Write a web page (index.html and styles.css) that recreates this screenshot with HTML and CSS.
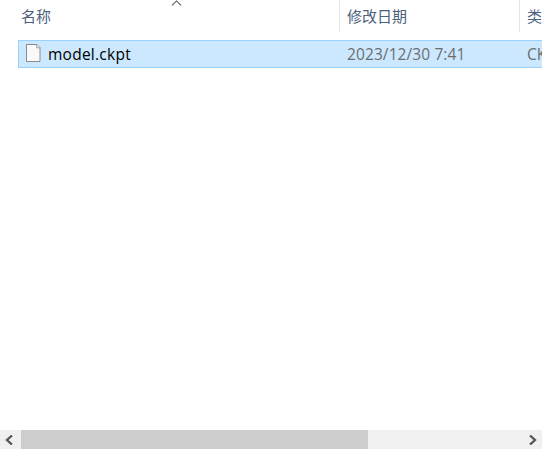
FILE: index.html
```html
<!DOCTYPE html>
<html lang="zh-CN">
<head>
<meta charset="utf-8">
<title>model.ckpt</title>
<link rel="stylesheet" href="styles.css">
</head>
<body>
<main class="explorer">
  <header class="columns">
    <div class="column column-name">名称
      <svg class="sort" width="11" height="6" viewBox="0 0 11 6"><path d="M1 5.3 5.5 .9 10 5.3" fill="none" stroke="#5c5c5c" stroke-width="1.1"/></svg>
    </div>
    <div class="column column-date">修改日期</div>
    <div class="column column-type">类</div>
  </header>
  <section class="files">
    <div class="file">
      <div class="file-name">
        <svg class="file-icon" width="15" height="18" viewBox="0 0 15 18"><path d="M.5.5H11L14 3.5V17.5H.5Z" fill="#f9f9f9" stroke="#8b8b8b"/><path d="M10.7.8V3.8H13.7" fill="#fff" stroke="#999"/></svg>
        <span>model.ckpt</span>
      </div>
      <div class="file-date">2023/12/30 7:41</div>
      <div class="file-type">CK</div>
    </div>
  </section>
  <footer class="scrollbar">
    <div class="arrow arrow-left"><svg width="8" height="10" viewBox="0 0 8 10"><path d="M7 .5 2 5 7 9.5" fill="none" stroke="#565656" stroke-width="2.3"/></svg></div>
    <div class="track"><div class="thumb"></div></div>
    <div class="arrow arrow-right"><svg width="8" height="10" viewBox="0 0 8 10"><path d="M1 .5 6 5 1 9.5" fill="none" stroke="#565656" stroke-width="2.3"/></svg></div>
  </footer>
</main>
</body>
</html>
```
FILE: styles.css
```css
* { box-sizing: border-box; }
body {
  margin: 0;
  background: #fff;
  font-family: "Open Sans", "Noto Sans CJK SC", sans-serif;
}
.explorer {
  display: flex;
  flex-direction: column;
  width: 542px;
  height: 449px;
  overflow: hidden;
}
.columns {
  display: grid;
  grid-template-columns: 322px 180px 180px;
  height: 32px;
  margin-left: 18px;
  color: #4c607a;
  font: 15px/32px "Noto Sans CJK SC", sans-serif;
}
.column {
  position: relative;
  padding-left: 7px;
  border-right: 1px solid #e5e5e5;
  white-space: nowrap;
}
.column-name { padding-left: 3px; }
.sort {
  position: absolute;
  top: 0;
  left: 153px;
}
.files {
  flex: 1;
  padding: 8px 0 0 18px;
}
.file {
  display: grid;
  grid-template-columns: 321px 180px 180px;
  width: 681px;
  height: 28px;
  border: 1px solid #99d1ff;
  background: #cce8ff;
  color: #6d6d6d;
  font-size: 15.5px;
  letter-spacing: .1px;
  line-height: 27px;
  white-space: nowrap;
}
.file-name {
  display: flex;
  align-items: center;
  gap: 7px;
  padding-left: 7px;
  color: #000;
  letter-spacing: .25px;
}
.file-icon { margin-top: -3px; }
.file-date, .file-type { padding-left: 7px; }
.scrollbar {
  display: grid;
  grid-template-columns: 21px 1fr 21px;
  height: 19px;
  background: #f0f0f0;
}
.arrow {
  display: flex;
  align-items: center;
}
.arrow-left { padding-left: 5px; }
.arrow-right { padding-left: 8px; }
.thumb {
  width: 347px;
  height: 19px;
  background: #cdcdcd;
}
```
